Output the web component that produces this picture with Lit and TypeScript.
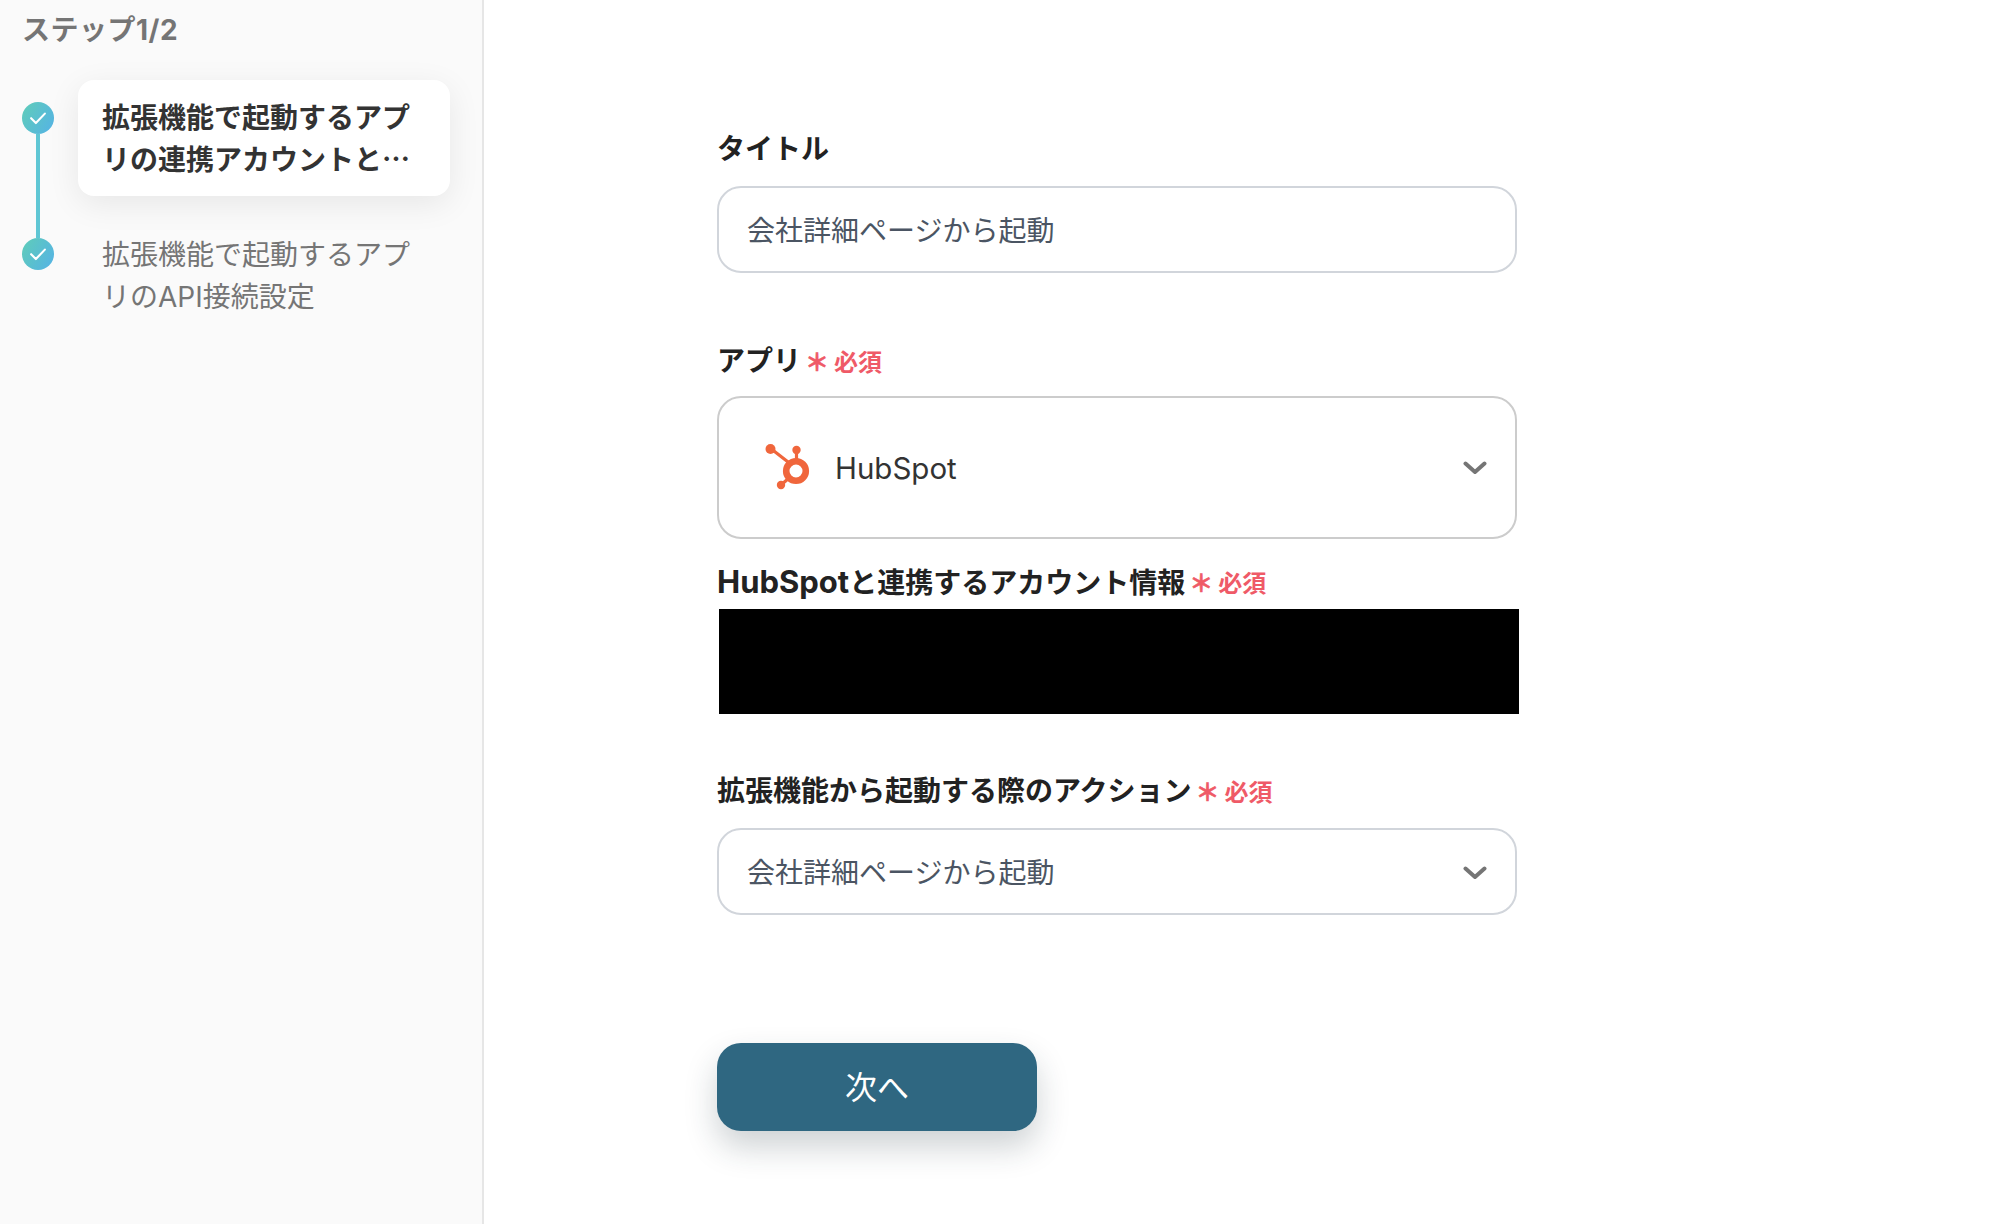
import { LitElement, html, css } from "lit";
import { customElement } from "lit/decorators.js";

const check = html`<svg class="check" viewBox="0 0 16 16"><path d="M2.500 8.200 6.300 12 13.500 4.500" fill="none" stroke="#fff" stroke-width="1.700" stroke-linecap="round" stroke-linejoin="round"/></svg>`;
const chevron = html`<svg class="chev" viewBox="0 0 24 14"><path d="M2.500 2.500 12 11 21.500 2.500" fill="none" stroke="#757575" stroke-width="4" stroke-linecap="round" stroke-linejoin="round"/></svg>`;
const hubspot = html`<svg class="hs" viewBox="0 0 48 48" fill="none">
  <circle cx="31" cy="27" r="9.800" stroke="#f0663c" stroke-width="6.600"/>
  <path d="M7 5.500 25 19.500M31.500 7V17M24 34 16 41" stroke="#f0663c" stroke-width="3.200"/>
  <circle cx="5.500" cy="5" r="5" fill="#f0663c"/>
  <circle cx="31.500" cy="6" r="4.200" fill="#f0663c"/>
  <circle cx="16" cy="41" r="4.200" fill="#f0663c"/>
</svg>`;
const req = html`<span class="req"><span class="ast">＊</span><span>必須</span></span>`;

@customElement("app-root")
export class AppRoot extends LitElement {
  static styles = css`
    :host { display: block; width: 1998px; height: 1224px; overflow: hidden; background: #fff; font-family: "Inter", "Noto Sans CJK JP", sans-serif; font-size: 28px; color: #222; }
    * { box-sizing: border-box; }
    .page { display: flex; height: 1224px; }
    .side { width: 484px; flex: none; background: #fafafa; border-right: 2px solid #e6e6e6; padding: 11px 0 0 22px; }
    .step-title { font-size: 28px; line-height: 38px; font-weight: 700; color: #757575; letter-spacing: .5px; }
    .steps { display: grid; grid-template-columns: 32px 372px; column-gap: 24px; margin-top: 31px; }
    .marker { display: flex; flex-direction: column; align-items: center; padding-top: 22px; }
    .dot { width: 32px; height: 32px; flex: none; border-radius: 50%; background: linear-gradient(120deg, #5fcdb8, #55b2e6); display: flex; align-items: center; justify-content: center; }
    .check { width: 20px; height: 20px; }
    .line { width: 4px; flex: 1; background: #5fc6d4; }
    .card { height: 116px; padding: 15px 24px; border-radius: 16px; background: #fff; box-shadow: 0 8px 32px rgba(0,0,0,.08); font-weight: 700; line-height: 42px; color: #333; margin-bottom: 42px; }
    .clamp { display: -webkit-box; -webkit-box-orient: vertical; -webkit-line-clamp: 2; overflow: hidden; font-family: "Noto Sans CJK JP", sans-serif; }
    .marker.last { padding-top: 0; }
    .plain { padding: 0 24px; line-height: 42px; color: #757575; margin-top: -4px; }
    .main { padding: 128px 0 0 233px; width: 1100px; }
    .label { display: flex; align-items: center; height: 40px; padding-top: 2px; font-weight: 700; color: #222; line-height: 38px; }
    .hs-bold { font-size: 31px; }
    .req { display: inline-flex; align-items: center; font-size: 24px; font-weight: 700; color: #ef5a67; margin-left: 4px; margin-top: 3px; }
    .ast { width: 24px; text-align: center; font-size: 24px; line-height: 24px; -webkit-text-stroke: .6px #ef5a67; }
    .req span + span { margin-left: 5px; }
    .field { width: 800px; border: 2px solid #d1d5db; border-radius: 24px; background: #fff; display: flex; align-items: center; color: #4b5563; }
    .text { height: 87px; padding: 0 28px 2px; margin-top: 18px; }
    .text .chev { margin-top: 4px; }
    .between { justify-content: space-between; }
    .chev { width: 24px; height: 14px; display: block; }
    .app { height: 143px; margin-top: 16px; padding: 0 28px 0 46px; border-color: #ccc; color: #333; }
    .app-left { display: flex; align-items: center; gap: 22px; }
    .hs-plain { font-size: 29.500px; }
    .hs { width: 48px; height: 48px; display: block; }
    .mask { width: 800px; height: 105px; margin: 8px 0 0 2px; background: #000; }
    .btn { width: 320px; height: 88px; margin-top: 128px; padding: 0 0 4px; border: 0; border-radius: 24px; background: #2f6781; color: #fff; font: inherit; font-size: 32px; box-shadow: 0 16px 32px rgba(30,50,60,.22); display: flex; align-items: center; justify-content: center; }
    .mt67 { margin-top: 67px; }
    .mt22 { margin-top: 22px; }
    .mt56 { margin-top: 56px; }
  `;

  render() {
    return html`<div class="page">
      <aside class="side">
        <div class="step-title">ステップ1/2</div>
        <div class="steps">
          <div class="marker"><span class="dot">${check}</span><span class="line"></span></div>
          <div class="card"><span class="clamp">拡張機能で起動するアプリの連携アカウントと接続設定</span></div>
          <div class="marker last"><span class="dot">${check}</span></div>
          <div class="plain">拡張機能で起動するアプリのAPI接続設定</div>
        </div>
      </aside>
      <main class="main">
        <div class="label">タイトル</div>
        <div class="field text">会社詳細ページから起動</div>
        <div class="label mt67">アプリ${req}</div>
        <div class="field app between"><span class="app-left">${hubspot}<span class="hs-plain">HubSpot</span></span>${chevron}</div>
        <div class="label mt22"><span><span class="hs-bold">HubSpot</span>と連携するアカウント情報</span>${req}</div>
        <div class="mask"></div>
        <div class="label mt56">拡張機能から起動する際のアクション${req}</div>
        <div class="field text between"><span>会社詳細ページから起動</span>${chevron}</div>
        <button class="btn">次へ</button>
      </main>
    </div>`;
  }
}
